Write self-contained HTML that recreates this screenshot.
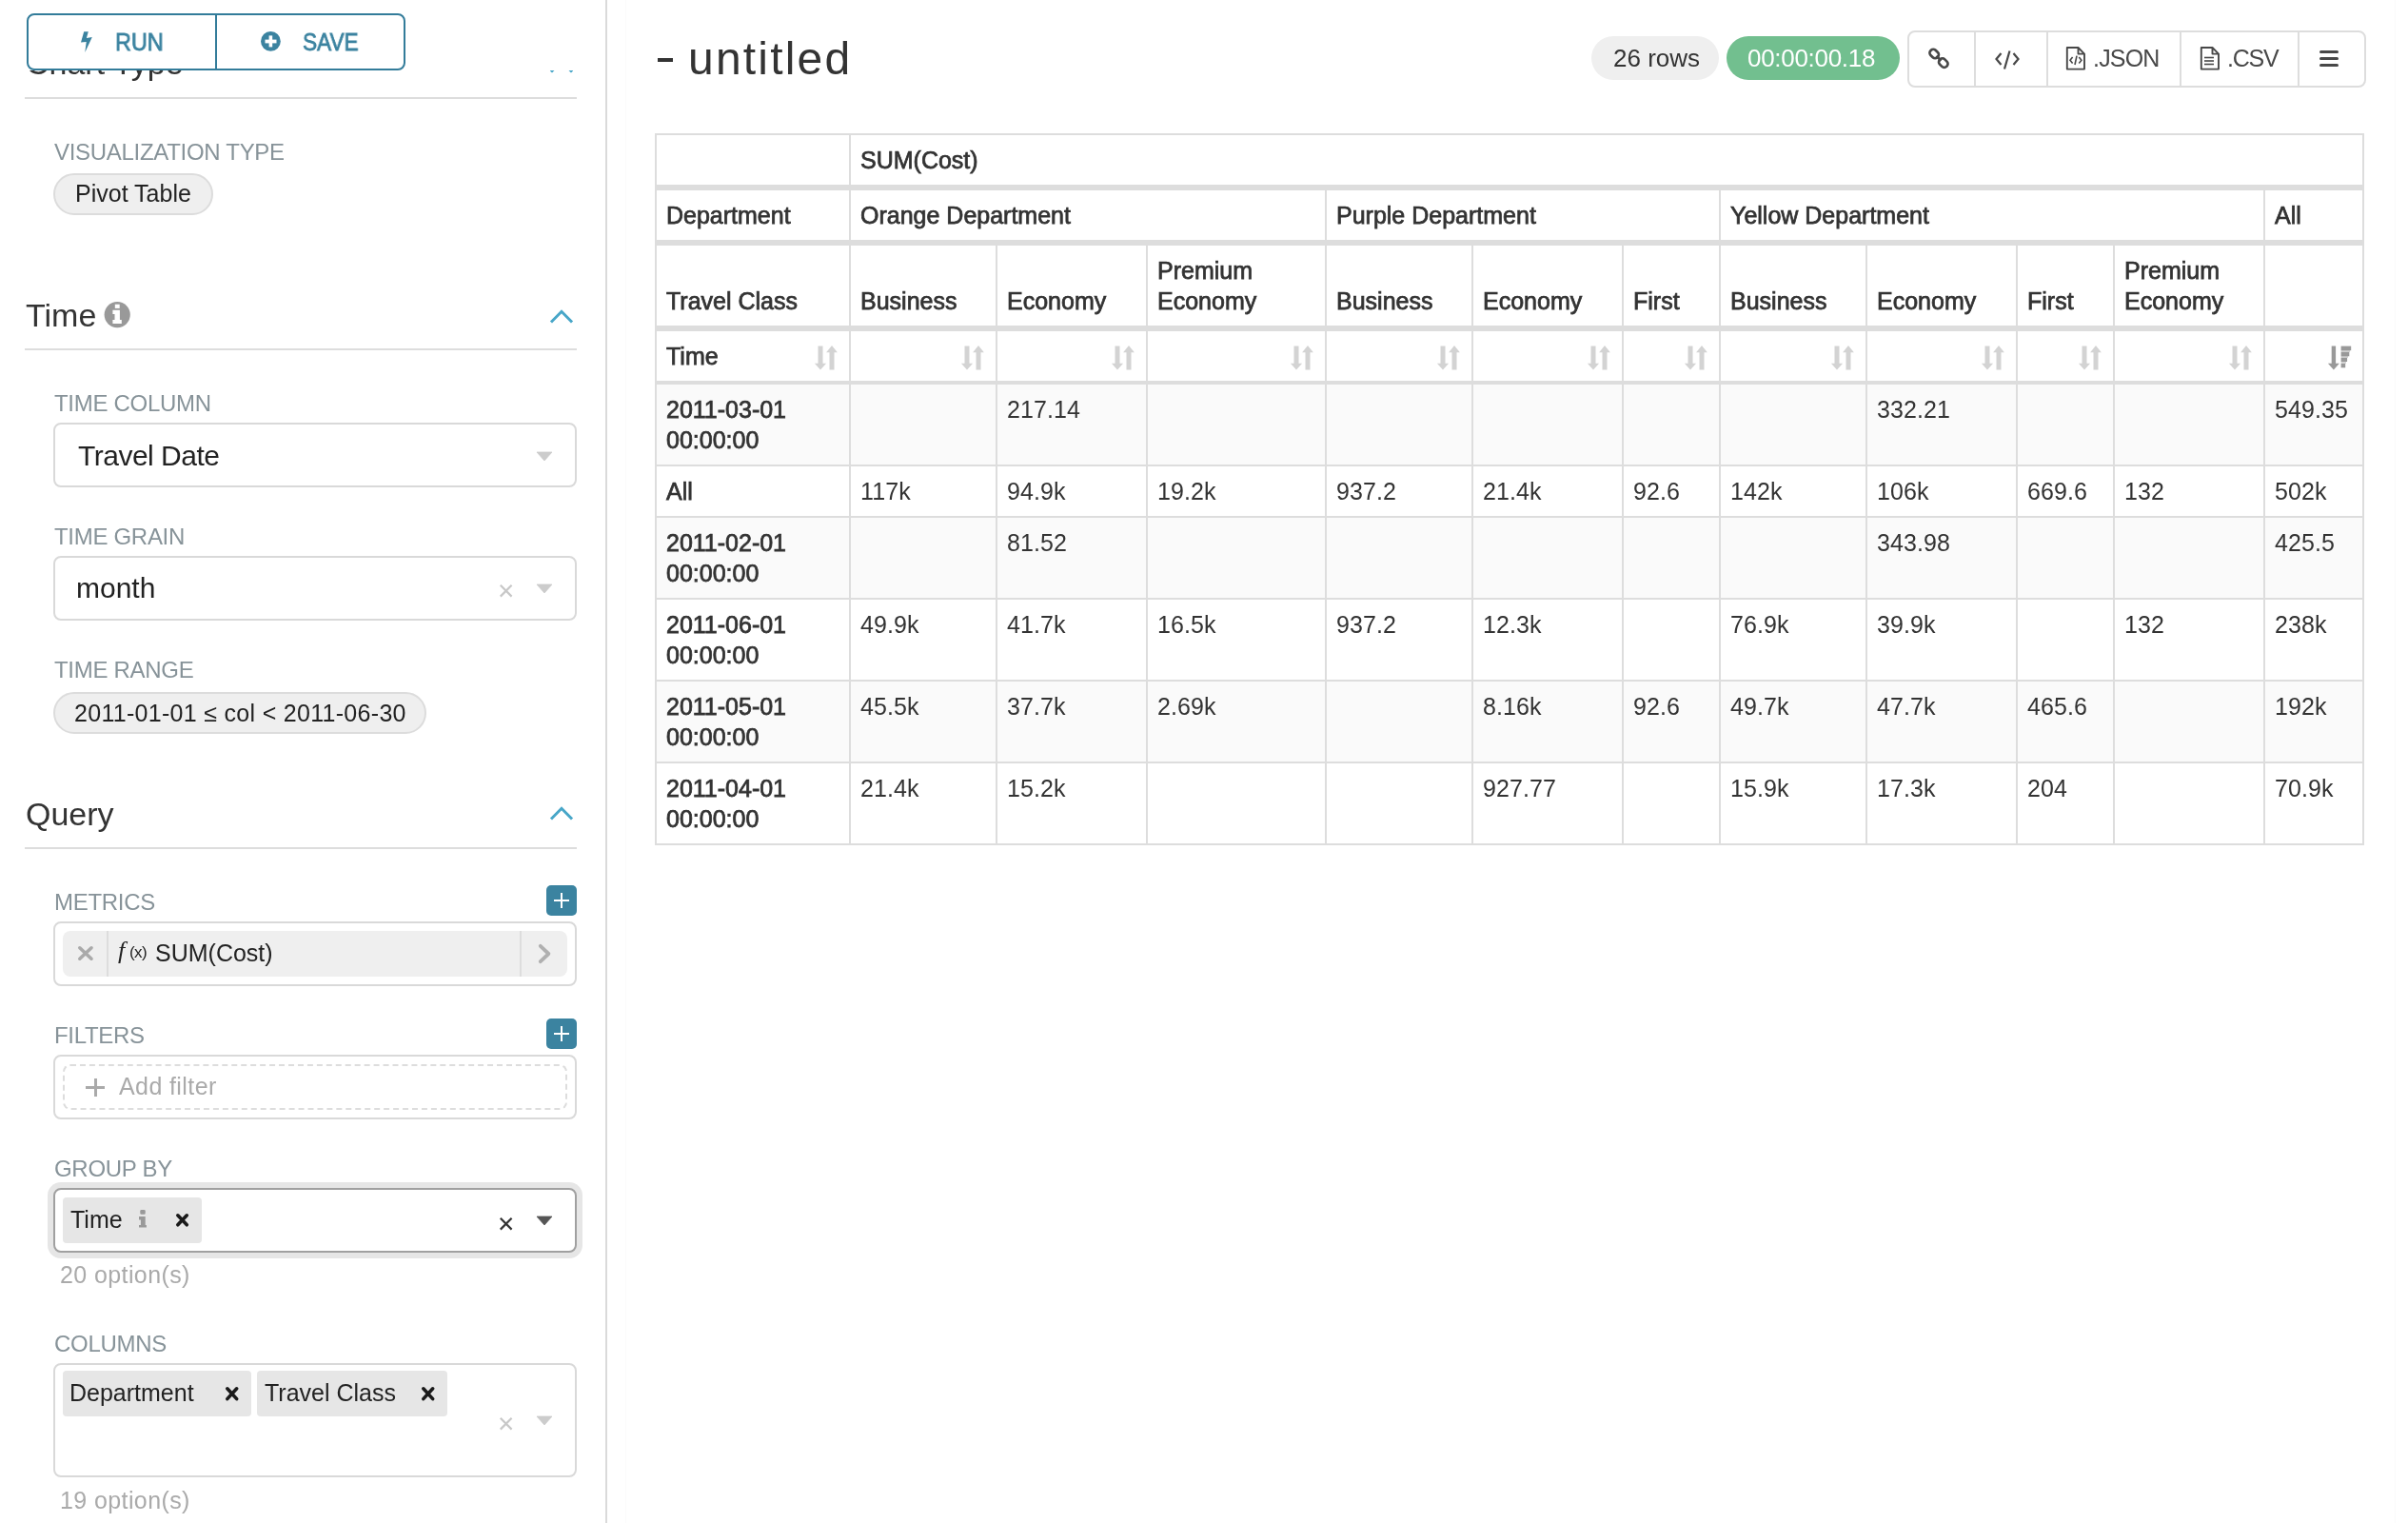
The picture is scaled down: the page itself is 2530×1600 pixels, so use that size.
<!DOCTYPE html>
<html><head><meta charset="utf-8"><title>Superset Explore</title>
<style>
html,body{margin:0;padding:0;background:#fff;}
body{width:2530px;height:1600px;position:relative;overflow:hidden;font-family:"Liberation Sans",sans-serif;}
.t{position:absolute;white-space:nowrap;will-change:transform;}
.r{position:absolute;}
</style></head><body>
<div class="r" style="left:636px;top:0px;width:2px;height:1600px;background:#dadada;"></div>
<div class="r" style="left:657px;top:0px;width:1px;height:1600px;background:#fafafa;"></div>
<div class="r" style="left:2516px;top:0px;width:1px;height:1600px;background:#fafafa;"></div>
<div class="t" style="left:27px;top:48.5px;font-size:34px;line-height:34px;color:#333;font-weight:400;letter-spacing:0px;">Chart Type</div>
<svg class="r" style="left:576px;top:58.5px;" width="28" height="22" viewBox="0 0 28 22"><polyline points="4,15.5 14,5.3 24,15.5" fill="none" stroke="#47a6c8" stroke-width="3" stroke-linecap="square" stroke-linejoin="miter"/></svg>
<div class="r" style="left:0px;top:0px;width:636px;height:74px;background:#fff;"></div>
<div class="r" style="left:28px;top:14px;width:398px;height:60px;box-sizing:border-box;border:2px solid #337c9a;border-radius:8px;background:#fff"></div>
<div class="r" style="left:226px;top:14px;width:2px;height:60px;background:#337c9a;"></div>
<svg class="r" style="left:84px;top:32px;" width="14" height="24" viewBox="0 0 14 24"><polygon points="4.2,1.2 8.8,1.2 6.9,8 12.8,7.1 5.3,22.9 6.7,12 1,12.6" fill="#3b83a0"/></svg>
<div class="t" style="left:121px;top:30.5px;font-size:26px;line-height:26px;color:#3b83a0;font-weight:400;letter-spacing:0px;-webkit-text-stroke:0.8px #3b83a0;transform:scaleX(0.9);transform-origin:0px 0;">RUN</div>
<svg class="r" style="left:273px;top:32px;" width="23" height="23" viewBox="0 0 23 23"><circle cx="11.4" cy="11.4" r="10.4" fill="#3b83a0"/><rect x="5.5" y="9.6" width="12" height="3.8" fill="#fff"/><rect x="9.6" y="5.4" width="3.6" height="12" fill="#fff"/></svg>
<div class="t" style="left:318px;top:30.5px;font-size:26px;line-height:26px;color:#3b83a0;font-weight:400;letter-spacing:0px;-webkit-text-stroke:0.8px #3b83a0;transform:scaleX(0.87);transform-origin:0px 0;">SAVE</div>
<div class="r" style="left:26px;top:102px;width:580px;height:2px;background:#dddddd;"></div>
<div class="r" style="left:26px;top:366px;width:580px;height:2px;background:#dddddd;"></div>
<div class="r" style="left:26px;top:890px;width:580px;height:2px;background:#dddddd;"></div>
<div class="t" style="left:57px;top:147.6px;font-size:24px;line-height:24px;color:#879399;font-weight:400;letter-spacing:-0.3px;">VISUALIZATION TYPE</div>
<div class="r" style="left:56px;top:182px;width:168px;height:44px;box-sizing:border-box;border:2px solid #dcdcdc;border-radius:22px;background:#efefef"></div>
<div class="t" style="left:79px;top:191px;font-size:25px;line-height:25px;color:#222;font-weight:400;letter-spacing:0px;">Pivot Table</div>
<div class="t" style="left:27px;top:314.0px;font-size:34px;line-height:34px;color:#333;font-weight:400;letter-spacing:0px;">Time</div>
<svg class="r" style="left:108px;top:315px;" width="30" height="30" viewBox="0 0 30 30"><circle cx="15.2" cy="15.6" r="13.6" fill="#999"/><rect x="12.8" y="4.7" width="4.9" height="4.2" fill="#fff"/><path d="M10.4,10.8 H17.9 V21 H19.8 V25 H10.4 V21 H12.5 V15 H10.4 Z" fill="#fff"/></svg>
<svg class="r" style="left:576px;top:322px;" width="28" height="22" viewBox="0 0 28 22"><polyline points="4,15.5 14,5.3 24,15.5" fill="none" stroke="#47a6c8" stroke-width="3" stroke-linecap="square" stroke-linejoin="miter"/></svg>
<div class="t" style="left:57px;top:412.3px;font-size:24px;line-height:24px;color:#879399;font-weight:400;letter-spacing:-0.3px;">TIME COLUMN</div>
<div class="r" style="left:56px;top:444px;width:550px;height:68px;box-sizing:border-box;border:2px solid #d9d9d9;border-radius:8px;background:#fff"></div>
<div class="t" style="left:82.4px;top:463.6px;font-size:30px;line-height:30px;color:#222;font-weight:400;letter-spacing:-0.5px;">Travel Date</div>
<svg class="r" style="left:563px;top:473.5px;" width="18" height="11" viewBox="0 0 18 11"><polygon points="1,1 17,1 9,10" fill="#cccccc" stroke="#cccccc" stroke-width="0.8" stroke-linejoin="round"/></svg>
<div class="t" style="left:57px;top:552.4px;font-size:24px;line-height:24px;color:#879399;font-weight:400;letter-spacing:-0.3px;">TIME GRAIN</div>
<div class="r" style="left:56px;top:584px;width:550px;height:68px;box-sizing:border-box;border:2px solid #d9d9d9;border-radius:8px;background:#fff"></div>
<div class="t" style="left:80px;top:603.2px;font-size:30px;line-height:30px;color:#222;font-weight:400;letter-spacing:0px;">month</div>
<svg class="r" style="left:523px;top:612px;" width="17.4" height="17.4" viewBox="0 0 17.4 17.4"><path d="M2.792,2.792 L14.608,14.608 M14.608,2.792 L2.792,14.608" stroke="#c8c8c8" stroke-width="2.2" stroke-linecap="butt"/></svg>
<svg class="r" style="left:563px;top:612.9px;" width="18" height="11" viewBox="0 0 18 11"><polygon points="1,1 17,1 9,10" fill="#cccccc" stroke="#cccccc" stroke-width="0.8" stroke-linejoin="round"/></svg>
<div class="t" style="left:57px;top:692.2px;font-size:24px;line-height:24px;color:#879399;font-weight:400;letter-spacing:-0.3px;">TIME RANGE</div>
<div class="r" style="left:56px;top:727px;width:392px;height:44px;box-sizing:border-box;border:2px solid #dcdcdc;border-radius:22px;background:#efefef"></div>
<div class="t" style="left:78.4px;top:737px;font-size:25px;line-height:25px;color:#222;font-weight:400;letter-spacing:0.3px;">2011-01-01 ≤ col &lt; 2011-06-30</div>
<div class="t" style="left:27px;top:838.0px;font-size:34px;line-height:34px;color:#333;font-weight:400;letter-spacing:0px;">Query</div>
<svg class="r" style="left:576px;top:844.2px;" width="28" height="22" viewBox="0 0 28 22"><polyline points="4,15.5 14,5.3 24,15.5" fill="none" stroke="#47a6c8" stroke-width="3" stroke-linecap="square" stroke-linejoin="miter"/></svg>
<div class="t" style="left:57px;top:936px;font-size:24px;line-height:24px;color:#879399;font-weight:400;letter-spacing:-0.3px;">METRICS</div>
<div class="r" style="left:574px;top:930px;width:32px;height:32px;box-sizing:border-box;background:#3b83a0;border-radius:5px"></div><div class="r" style="left:582px;top:945px;width:16px;height:2px;background:#fff;"></div><div class="r" style="left:589px;top:938px;width:2px;height:16px;background:#fff;"></div>
<div class="r" style="left:56px;top:968px;width:550px;height:68px;box-sizing:border-box;border:2px solid #d9d9d9;border-radius:8px;background:#fff"></div>
<div class="r" style="left:66px;top:978px;width:530px;height:48px;box-sizing:border-box;background:#efefef;border-radius:8px"></div>
<div class="r" style="left:112px;top:978px;width:2px;height:48px;background:#dddddd;"></div>
<div class="r" style="left:546px;top:978px;width:2px;height:48px;background:#dddddd;"></div>
<svg class="r" style="left:80.1px;top:992.4px;" width="19.8" height="19" viewBox="0 0 19.8 19"><path d="M3.8,3.8 L16.0,15.2 M16.0,3.8 L3.8,15.2" stroke="#aaaaaa" stroke-width="3.6" stroke-linecap="round"/></svg>
<div class="t" style="left:124px;top:986px;font-size:26px;line-height:26px;color:#222;font-weight:400;letter-spacing:0px;font-family:'Liberation Serif',serif"><i>f</i></div>
<div class="t" style="left:135.5px;top:991.5px;font-size:17px;line-height:17px;color:#222;font-weight:400;letter-spacing:-0.6px;font-family:'Liberation Sans',sans-serif">(x)</div>
<div class="t" style="left:163px;top:989px;font-size:25px;line-height:25px;color:#222;font-weight:400;letter-spacing:0px;">SUM(Cost)</div>
<svg class="r" style="left:562px;top:990px;" width="20" height="24" viewBox="0 0 20 24"><polyline points="5.8,3.8 14.4,12 5.8,20.2" fill="none" stroke="#b0b0b0" stroke-width="3.8" stroke-linecap="round" stroke-linejoin="round"/></svg>
<div class="t" style="left:57px;top:1076px;font-size:24px;line-height:24px;color:#879399;font-weight:400;letter-spacing:-0.3px;">FILTERS</div>
<div class="r" style="left:574px;top:1070px;width:32px;height:32px;box-sizing:border-box;background:#3b83a0;border-radius:5px"></div><div class="r" style="left:582px;top:1085px;width:16px;height:2px;background:#fff;"></div><div class="r" style="left:589px;top:1078px;width:2px;height:16px;background:#fff;"></div>
<div class="r" style="left:56px;top:1108px;width:550px;height:68px;box-sizing:border-box;border:2px solid #d9d9d9;border-radius:8px;background:#fff"></div>
<div class="r" style="left:66px;top:1118px;width:530px;height:48px;box-sizing:border-box;border:2px dashed #dddddd;border-radius:8px"></div>
<div class="r" style="left:90px;top:1141px;width:20px;height:3px;background:#aaaaaa;"></div><div class="r" style="left:98.5px;top:1132.5px;width:3.0px;height:19.5px;background:#aaaaaa;"></div>
<div class="t" style="left:125px;top:1129.4px;font-size:25px;line-height:25px;color:#aaaaaa;font-weight:400;letter-spacing:0.4px;">Add filter</div>
<div class="t" style="left:57px;top:1216px;font-size:24px;line-height:24px;color:#879399;font-weight:400;letter-spacing:-0.3px;">GROUP BY</div>
<div class="r" style="left:50px;top:1242px;width:562px;height:80px;box-sizing:border-box;background:#e6e6e6;border-radius:14px"></div>
<div class="r" style="left:56px;top:1248px;width:550px;height:68px;box-sizing:border-box;border:2px solid #a0a0a0;border-radius:8px;background:#fff"></div>
<div class="r" style="left:66px;top:1258px;width:146px;height:48px;box-sizing:border-box;background:#e6e6e6;border-radius:4px"></div>
<div class="t" style="left:74px;top:1269px;font-size:25px;line-height:25px;color:#222;font-weight:400;letter-spacing:0px;">Time</div>
<svg class="r" style="left:144px;top:1269px;" width="12" height="23" viewBox="0 0 12 23"><rect x="3.3" y="2" width="5.4" height="4.7" rx="1.2" fill="#999"/><path d="M2,9.1 H8.7 V18 H9.9 V20.6 H2 V18 H3.9 V12.6 H2 Z" fill="#999"/></svg>
<svg class="r" style="left:183.4px;top:1273.1px;" width="17.1" height="17.6" viewBox="0 0 17.1 17.6"><path d="M3.8,3.8 L13.299999999999999,13.799999999999999 M13.299999999999999,3.8 L3.8,13.799999999999999" stroke="#1a1a1a" stroke-width="3.6" stroke-linecap="round"/></svg>
<svg class="r" style="left:523px;top:1276.5px;" width="17.4" height="17.4" viewBox="0 0 17.4 17.4"><path d="M2.792,2.792 L14.608,14.608 M14.608,2.792 L2.792,14.608" stroke="#333333" stroke-width="2.2" stroke-linecap="butt"/></svg>
<svg class="r" style="left:563px;top:1277px;" width="18" height="11" viewBox="0 0 18 11"><polygon points="1,1 17,1 9,10" fill="#555555" stroke="#555555" stroke-width="0.8" stroke-linejoin="round"/></svg>
<div class="t" style="left:63.3px;top:1327.4px;font-size:25px;line-height:25px;color:#aaaaaa;font-weight:400;letter-spacing:0.4px;">20 option(s)</div>
<div class="t" style="left:57px;top:1400.3px;font-size:24px;line-height:24px;color:#879399;font-weight:400;letter-spacing:-0.3px;">COLUMNS</div>
<div class="r" style="left:56px;top:1432px;width:550px;height:120px;box-sizing:border-box;border:2px solid #d9d9d9;border-radius:8px;background:#fff"></div>
<div class="r" style="left:66px;top:1440px;width:198px;height:48px;box-sizing:border-box;background:#e6e6e6;border-radius:4px"></div>
<div class="t" style="left:73px;top:1451px;font-size:25px;line-height:25px;color:#222;font-weight:400;letter-spacing:0px;">Department</div>
<svg class="r" style="left:235.2px;top:1454.7px;" width="17.5" height="18.4" viewBox="0 0 17.5 18.4"><path d="M3.8,3.8 L13.7,14.6 M13.7,3.8 L3.8,14.6" stroke="#1a1a1a" stroke-width="3.6" stroke-linecap="round"/></svg>
<div class="r" style="left:270px;top:1440px;width:200px;height:48px;box-sizing:border-box;background:#e6e6e6;border-radius:4px"></div>
<div class="t" style="left:278.3px;top:1451px;font-size:25px;line-height:25px;color:#222;font-weight:400;letter-spacing:0px;">Travel Class</div>
<svg class="r" style="left:441.3px;top:1454.7px;" width="17.5" height="18.4" viewBox="0 0 17.5 18.4"><path d="M3.8,3.8 L13.7,14.6 M13.7,3.8 L3.8,14.6" stroke="#1a1a1a" stroke-width="3.6" stroke-linecap="round"/></svg>
<svg class="r" style="left:523px;top:1487px;" width="17.4" height="17.4" viewBox="0 0 17.4 17.4"><path d="M2.792,2.792 L14.608,14.608 M14.608,2.792 L2.792,14.608" stroke="#c8c8c8" stroke-width="2.2" stroke-linecap="butt"/></svg>
<svg class="r" style="left:563px;top:1487px;" width="18" height="11" viewBox="0 0 18 11"><polygon points="1,1 17,1 9,10" fill="#cccccc" stroke="#cccccc" stroke-width="0.8" stroke-linejoin="round"/></svg>
<div class="t" style="left:63.3px;top:1563.6px;font-size:25px;line-height:25px;color:#aaaaaa;font-weight:400;letter-spacing:0.4px;">19 option(s)</div>
<div class="r" style="left:691px;top:61px;width:16px;height:4px;background:#333;"></div>
<div class="t" style="left:723.4px;top:37.7px;font-size:48px;line-height:48px;color:#333;font-weight:400;letter-spacing:2.2px;">untitled</div>
<div class="r" style="left:1672px;top:38px;width:134px;height:46px;box-sizing:border-box;background:#efefef;border-radius:23px"></div>
<div class="t" style="left:1695px;top:48px;font-size:26px;line-height:26px;color:#333;font-weight:400;letter-spacing:0px;">26 rows</div>
<div class="r" style="left:1814px;top:38px;width:182px;height:46px;box-sizing:border-box;background:#72bf8f;border-radius:23px"></div>
<div class="t" style="left:1836px;top:48px;font-size:26px;line-height:26px;color:#fff;font-weight:400;letter-spacing:-0.3px;">00:00:00.18</div>
<div class="r" style="left:2004px;top:32px;width:482px;height:60px;box-sizing:border-box;border:2px solid #dddddd;border-radius:8px;background:#fff"></div>
<div class="r" style="left:2074px;top:32px;width:2px;height:60px;background:#dddddd;"></div>
<div class="r" style="left:2150px;top:32px;width:2px;height:60px;background:#dddddd;"></div>
<div class="r" style="left:2290px;top:32px;width:2px;height:60px;background:#dddddd;"></div>
<div class="r" style="left:2414px;top:32px;width:2px;height:60px;background:#dddddd;"></div>
<svg class="r" style="left:2022px;top:46px;" width="30" height="30" viewBox="0 0 30 30"><g fill="none" stroke="#484848" stroke-width="2.7"><rect x="5.2" y="6.8" width="10" height="7.4" rx="3.4" transform="rotate(45 10.2 10.5)"/><rect x="14.8" y="16.4" width="10" height="7.4" rx="3.4" transform="rotate(45 19.8 20.1)"/></g><path d="M12.5,12.8 L17.5,17.8" stroke="#484848" stroke-width="2.7"/></svg>
<svg class="r" style="left:2095px;top:53px;" width="28" height="22" viewBox="0 0 28 22"><g fill="none" stroke="#484848" stroke-width="2.2"><polyline points="7.5,3 2.5,9 7.5,15"/><polyline points="20.5,3 25.5,9 20.5,15"/><line x1="16.5" y1="0.5" x2="11" y2="19.5"/></g></svg>
<svg class="r" style="left:2170px;top:48px;" width="24" height="27" viewBox="0 0 24 27"><path d="M1.8,2 H13.5 L20,8.6 V24.6 H1.8 Z M13.5,2 V8.6 H20" fill="none" stroke="#484848" stroke-width="1.9" stroke-linejoin="round"/><g fill="none" stroke="#484848" stroke-width="1.6"><polyline points="7.6,12 5,15.2 7.6,18.4"/><polyline points="14.3,12 16.9,15.2 14.3,18.4"/><line x1="12" y1="10.7" x2="10" y2="20"/></g></svg>
<div class="t" style="left:2199.4px;top:48.900000000000006px;font-size:25px;line-height:25px;color:#484848;font-weight:400;letter-spacing:-0.8px;">.JSON</div>
<svg class="r" style="left:2311px;top:48px;" width="24" height="27" viewBox="0 0 24 27"><path d="M1.8,2 H13.5 L20,8.6 V24.6 H1.8 Z M13.5,2 V8.6 H20" fill="none" stroke="#484848" stroke-width="1.9" stroke-linejoin="round"/><g stroke="#484848" stroke-width="1.6"><line x1="5" y1="12.5" x2="15" y2="12.5"/><line x1="5" y1="16" x2="15" y2="16"/><line x1="5" y1="19.5" x2="15" y2="19.5"/></g></svg>
<div class="t" style="left:2340px;top:48.7px;font-size:25px;line-height:25px;color:#484848;font-weight:400;letter-spacing:-1.2px;">.CSV</div>
<div class="r" style="left:2437px;top:53px;width:20px;height:3px;box-sizing:border-box;background:#484848;border-radius:1.5px"></div>
<div class="r" style="left:2437px;top:60px;width:20px;height:3px;box-sizing:border-box;background:#484848;border-radius:1.5px"></div>
<div class="r" style="left:2437px;top:67px;width:20px;height:3px;box-sizing:border-box;background:#484848;border-radius:1.5px"></div>
<div class="r" style="left:690px;top:404px;width:1792px;height:84px;background:#fafafa;"></div>
<div class="r" style="left:690px;top:544px;width:1792px;height:84px;background:#fafafa;"></div>
<div class="r" style="left:690px;top:716px;width:1792px;height:84px;background:#fafafa;"></div>
<div class="r" style="left:688px;top:140px;width:1796px;height:2px;background:#dddddd;"></div>
<div class="r" style="left:688px;top:194px;width:1796px;height:6px;background:#dddddd;"></div>
<div class="r" style="left:688px;top:252px;width:1796px;height:6px;background:#dddddd;"></div>
<div class="r" style="left:688px;top:342px;width:1796px;height:6px;background:#dddddd;"></div>
<div class="r" style="left:688px;top:400px;width:1796px;height:4px;background:#dddddd;"></div>
<div class="r" style="left:688px;top:488px;width:1796px;height:2px;background:#dddddd;"></div>
<div class="r" style="left:688px;top:542px;width:1796px;height:2px;background:#dddddd;"></div>
<div class="r" style="left:688px;top:628px;width:1796px;height:2px;background:#dddddd;"></div>
<div class="r" style="left:688px;top:714px;width:1796px;height:2px;background:#dddddd;"></div>
<div class="r" style="left:688px;top:800px;width:1796px;height:2px;background:#dddddd;"></div>
<div class="r" style="left:688px;top:886px;width:1796px;height:2px;background:#dddddd;"></div>
<div class="r" style="left:688px;top:140px;width:2px;height:748px;background:#dddddd;"></div>
<div class="r" style="left:2482px;top:140px;width:2px;height:748px;background:#dddddd;"></div>
<div class="r" style="left:892px;top:140px;width:2px;height:748px;background:#dddddd;"></div>
<div class="r" style="left:1392px;top:194px;width:2px;height:694px;background:#dddddd;"></div>
<div class="r" style="left:1806px;top:194px;width:2px;height:694px;background:#dddddd;"></div>
<div class="r" style="left:2378px;top:194px;width:2px;height:694px;background:#dddddd;"></div>
<div class="r" style="left:1046px;top:252px;width:2px;height:636px;background:#dddddd;"></div>
<div class="r" style="left:1204px;top:252px;width:2px;height:636px;background:#dddddd;"></div>
<div class="r" style="left:1546px;top:252px;width:2px;height:636px;background:#dddddd;"></div>
<div class="r" style="left:1704px;top:252px;width:2px;height:636px;background:#dddddd;"></div>
<div class="r" style="left:1960px;top:252px;width:2px;height:636px;background:#dddddd;"></div>
<div class="r" style="left:2118px;top:252px;width:2px;height:636px;background:#dddddd;"></div>
<div class="r" style="left:2220px;top:252px;width:2px;height:636px;background:#dddddd;"></div>
<div class="t" style="left:904px;top:155.5px;font-size:25px;line-height:25px;color:#333333;font-weight:400;letter-spacing:0px;-webkit-text-stroke:0.75px #333333;">SUM(Cost)</div>
<div class="t" style="left:700px;top:213.5px;font-size:25px;line-height:25px;color:#333333;font-weight:400;letter-spacing:0px;-webkit-text-stroke:0.75px #333333;">Department</div>
<div class="t" style="left:904px;top:213.5px;font-size:25px;line-height:25px;color:#333333;font-weight:400;letter-spacing:0px;-webkit-text-stroke:0.75px #333333;">Orange Department</div>
<div class="t" style="left:1404px;top:213.5px;font-size:25px;line-height:25px;color:#333333;font-weight:400;letter-spacing:0px;-webkit-text-stroke:0.75px #333333;">Purple Department</div>
<div class="t" style="left:1818px;top:213.5px;font-size:25px;line-height:25px;color:#333333;font-weight:400;letter-spacing:0px;-webkit-text-stroke:0.75px #333333;">Yellow Department</div>
<div class="t" style="left:2390px;top:213.5px;font-size:25px;line-height:25px;color:#333333;font-weight:400;letter-spacing:0px;-webkit-text-stroke:0.75px #333333;">All</div>
<div class="t" style="left:700px;top:303.5px;font-size:25px;line-height:25px;color:#333333;font-weight:400;letter-spacing:0px;-webkit-text-stroke:0.75px #333333;">Travel Class</div>
<div class="t" style="left:904px;top:303.5px;font-size:25px;line-height:25px;color:#333333;font-weight:400;letter-spacing:0px;-webkit-text-stroke:0.75px #333333;">Business</div>
<div class="t" style="left:1058px;top:303.5px;font-size:25px;line-height:25px;color:#333333;font-weight:400;letter-spacing:0px;-webkit-text-stroke:0.75px #333333;">Economy</div>
<div class="t" style="left:1216px;top:271.5px;font-size:25px;line-height:25px;color:#333333;font-weight:400;letter-spacing:0px;-webkit-text-stroke:0.75px #333333;">Premium</div>
<div class="t" style="left:1216px;top:303.5px;font-size:25px;line-height:25px;color:#333333;font-weight:400;letter-spacing:0px;-webkit-text-stroke:0.75px #333333;">Economy</div>
<div class="t" style="left:1404px;top:303.5px;font-size:25px;line-height:25px;color:#333333;font-weight:400;letter-spacing:0px;-webkit-text-stroke:0.75px #333333;">Business</div>
<div class="t" style="left:1558px;top:303.5px;font-size:25px;line-height:25px;color:#333333;font-weight:400;letter-spacing:0px;-webkit-text-stroke:0.75px #333333;">Economy</div>
<div class="t" style="left:1716px;top:303.5px;font-size:25px;line-height:25px;color:#333333;font-weight:400;letter-spacing:0px;-webkit-text-stroke:0.75px #333333;">First</div>
<div class="t" style="left:1818px;top:303.5px;font-size:25px;line-height:25px;color:#333333;font-weight:400;letter-spacing:0px;-webkit-text-stroke:0.75px #333333;">Business</div>
<div class="t" style="left:1972px;top:303.5px;font-size:25px;line-height:25px;color:#333333;font-weight:400;letter-spacing:0px;-webkit-text-stroke:0.75px #333333;">Economy</div>
<div class="t" style="left:2130px;top:303.5px;font-size:25px;line-height:25px;color:#333333;font-weight:400;letter-spacing:0px;-webkit-text-stroke:0.75px #333333;">First</div>
<div class="t" style="left:2232px;top:271.5px;font-size:25px;line-height:25px;color:#333333;font-weight:400;letter-spacing:0px;-webkit-text-stroke:0.75px #333333;">Premium</div>
<div class="t" style="left:2232px;top:303.5px;font-size:25px;line-height:25px;color:#333333;font-weight:400;letter-spacing:0px;-webkit-text-stroke:0.75px #333333;">Economy</div>
<div class="t" style="left:700px;top:361.5px;font-size:25px;line-height:25px;color:#333333;font-weight:400;letter-spacing:0px;-webkit-text-stroke:0.75px #333333;">Time</div>
<svg class="r" style="left:855px;top:362px;" width="27" height="28" viewBox="0 0 27 28"><path d="M4.5,1.5 H9.5 V19.8 H13.1 L7,26.4 L0.9,19.8 H4.5 Z M16.5,26.6 H21.5 V8.3 H24.9 L19,1.1 L13.1,8.3 H16.5 Z" fill="#d3d3d3"/></svg>
<svg class="r" style="left:1009px;top:362px;" width="27" height="28" viewBox="0 0 27 28"><path d="M4.5,1.5 H9.5 V19.8 H13.1 L7,26.4 L0.9,19.8 H4.5 Z M16.5,26.6 H21.5 V8.3 H24.9 L19,1.1 L13.1,8.3 H16.5 Z" fill="#d3d3d3"/></svg>
<svg class="r" style="left:1167px;top:362px;" width="27" height="28" viewBox="0 0 27 28"><path d="M4.5,1.5 H9.5 V19.8 H13.1 L7,26.4 L0.9,19.8 H4.5 Z M16.5,26.6 H21.5 V8.3 H24.9 L19,1.1 L13.1,8.3 H16.5 Z" fill="#d3d3d3"/></svg>
<svg class="r" style="left:1355px;top:362px;" width="27" height="28" viewBox="0 0 27 28"><path d="M4.5,1.5 H9.5 V19.8 H13.1 L7,26.4 L0.9,19.8 H4.5 Z M16.5,26.6 H21.5 V8.3 H24.9 L19,1.1 L13.1,8.3 H16.5 Z" fill="#d3d3d3"/></svg>
<svg class="r" style="left:1509px;top:362px;" width="27" height="28" viewBox="0 0 27 28"><path d="M4.5,1.5 H9.5 V19.8 H13.1 L7,26.4 L0.9,19.8 H4.5 Z M16.5,26.6 H21.5 V8.3 H24.9 L19,1.1 L13.1,8.3 H16.5 Z" fill="#d3d3d3"/></svg>
<svg class="r" style="left:1667px;top:362px;" width="27" height="28" viewBox="0 0 27 28"><path d="M4.5,1.5 H9.5 V19.8 H13.1 L7,26.4 L0.9,19.8 H4.5 Z M16.5,26.6 H21.5 V8.3 H24.9 L19,1.1 L13.1,8.3 H16.5 Z" fill="#d3d3d3"/></svg>
<svg class="r" style="left:1769px;top:362px;" width="27" height="28" viewBox="0 0 27 28"><path d="M4.5,1.5 H9.5 V19.8 H13.1 L7,26.4 L0.9,19.8 H4.5 Z M16.5,26.6 H21.5 V8.3 H24.9 L19,1.1 L13.1,8.3 H16.5 Z" fill="#d3d3d3"/></svg>
<svg class="r" style="left:1923px;top:362px;" width="27" height="28" viewBox="0 0 27 28"><path d="M4.5,1.5 H9.5 V19.8 H13.1 L7,26.4 L0.9,19.8 H4.5 Z M16.5,26.6 H21.5 V8.3 H24.9 L19,1.1 L13.1,8.3 H16.5 Z" fill="#d3d3d3"/></svg>
<svg class="r" style="left:2081px;top:362px;" width="27" height="28" viewBox="0 0 27 28"><path d="M4.5,1.5 H9.5 V19.8 H13.1 L7,26.4 L0.9,19.8 H4.5 Z M16.5,26.6 H21.5 V8.3 H24.9 L19,1.1 L13.1,8.3 H16.5 Z" fill="#d3d3d3"/></svg>
<svg class="r" style="left:2183px;top:362px;" width="27" height="28" viewBox="0 0 27 28"><path d="M4.5,1.5 H9.5 V19.8 H13.1 L7,26.4 L0.9,19.8 H4.5 Z M16.5,26.6 H21.5 V8.3 H24.9 L19,1.1 L13.1,8.3 H16.5 Z" fill="#d3d3d3"/></svg>
<svg class="r" style="left:2341px;top:362px;" width="27" height="28" viewBox="0 0 27 28"><path d="M4.5,1.5 H9.5 V19.8 H13.1 L7,26.4 L0.9,19.8 H4.5 Z M16.5,26.6 H21.5 V8.3 H24.9 L19,1.1 L13.1,8.3 H16.5 Z" fill="#d3d3d3"/></svg>
<svg class="r" style="left:2445px;top:362px;" width="27" height="28" viewBox="0 0 27 28"><path d="M14.6,6 H24 V8 H14.6 Z M14.6,12 H22 V14 H14.6 Z M14.6,18 H20 V20 H14.6 Z" fill="#d3d3d3"/><path d="M4.7,1.6 H9.1 V19.8 H12.9 L6.9,26.6 L0.9,19.8 H4.7 Z" fill="#999999"/><rect x="14.6" y="1.6" width="10.6" height="4.6" fill="#999999"/><rect x="14.6" y="7.9" width="8.7" height="4.4" fill="#999999"/><rect x="14.6" y="13.9" width="6.5" height="4.1" fill="#999999"/><rect x="14.6" y="20" width="4.6" height="4.3" fill="#999999"/></svg>
<div class="t" style="left:700px;top:417.5px;font-size:25px;line-height:25px;color:#333333;font-weight:400;letter-spacing:0px;-webkit-text-stroke:0.75px #333333;">2011-03-01</div>
<div class="t" style="left:700px;top:449.5px;font-size:25px;line-height:25px;color:#333333;font-weight:400;letter-spacing:0px;-webkit-text-stroke:0.75px #333333;">00:00:00</div>
<div class="t" style="left:1058px;top:417.5px;font-size:25px;line-height:25px;color:#333333;font-weight:400;letter-spacing:0.1px;">217.14</div>
<div class="t" style="left:1972px;top:417.5px;font-size:25px;line-height:25px;color:#333333;font-weight:400;letter-spacing:0.1px;">332.21</div>
<div class="t" style="left:2390px;top:417.5px;font-size:25px;line-height:25px;color:#333333;font-weight:400;letter-spacing:0.1px;">549.35</div>
<div class="t" style="left:700px;top:503.5px;font-size:25px;line-height:25px;color:#333333;font-weight:400;letter-spacing:0px;-webkit-text-stroke:0.75px #333333;">All</div>
<div class="t" style="left:904px;top:503.5px;font-size:25px;line-height:25px;color:#333333;font-weight:400;letter-spacing:0.1px;">117k</div>
<div class="t" style="left:1058px;top:503.5px;font-size:25px;line-height:25px;color:#333333;font-weight:400;letter-spacing:0.1px;">94.9k</div>
<div class="t" style="left:1216px;top:503.5px;font-size:25px;line-height:25px;color:#333333;font-weight:400;letter-spacing:0.1px;">19.2k</div>
<div class="t" style="left:1404px;top:503.5px;font-size:25px;line-height:25px;color:#333333;font-weight:400;letter-spacing:0.1px;">937.2</div>
<div class="t" style="left:1558px;top:503.5px;font-size:25px;line-height:25px;color:#333333;font-weight:400;letter-spacing:0.1px;">21.4k</div>
<div class="t" style="left:1716px;top:503.5px;font-size:25px;line-height:25px;color:#333333;font-weight:400;letter-spacing:0.1px;">92.6</div>
<div class="t" style="left:1818px;top:503.5px;font-size:25px;line-height:25px;color:#333333;font-weight:400;letter-spacing:0.1px;">142k</div>
<div class="t" style="left:1972px;top:503.5px;font-size:25px;line-height:25px;color:#333333;font-weight:400;letter-spacing:0.1px;">106k</div>
<div class="t" style="left:2130px;top:503.5px;font-size:25px;line-height:25px;color:#333333;font-weight:400;letter-spacing:0.1px;">669.6</div>
<div class="t" style="left:2232px;top:503.5px;font-size:25px;line-height:25px;color:#333333;font-weight:400;letter-spacing:0.1px;">132</div>
<div class="t" style="left:2390px;top:503.5px;font-size:25px;line-height:25px;color:#333333;font-weight:400;letter-spacing:0.1px;">502k</div>
<div class="t" style="left:700px;top:557.5px;font-size:25px;line-height:25px;color:#333333;font-weight:400;letter-spacing:0px;-webkit-text-stroke:0.75px #333333;">2011-02-01</div>
<div class="t" style="left:700px;top:589.5px;font-size:25px;line-height:25px;color:#333333;font-weight:400;letter-spacing:0px;-webkit-text-stroke:0.75px #333333;">00:00:00</div>
<div class="t" style="left:1058px;top:557.5px;font-size:25px;line-height:25px;color:#333333;font-weight:400;letter-spacing:0.1px;">81.52</div>
<div class="t" style="left:1972px;top:557.5px;font-size:25px;line-height:25px;color:#333333;font-weight:400;letter-spacing:0.1px;">343.98</div>
<div class="t" style="left:2390px;top:557.5px;font-size:25px;line-height:25px;color:#333333;font-weight:400;letter-spacing:0.1px;">425.5</div>
<div class="t" style="left:700px;top:643.5px;font-size:25px;line-height:25px;color:#333333;font-weight:400;letter-spacing:0px;-webkit-text-stroke:0.75px #333333;">2011-06-01</div>
<div class="t" style="left:700px;top:675.5px;font-size:25px;line-height:25px;color:#333333;font-weight:400;letter-spacing:0px;-webkit-text-stroke:0.75px #333333;">00:00:00</div>
<div class="t" style="left:904px;top:643.5px;font-size:25px;line-height:25px;color:#333333;font-weight:400;letter-spacing:0.1px;">49.9k</div>
<div class="t" style="left:1058px;top:643.5px;font-size:25px;line-height:25px;color:#333333;font-weight:400;letter-spacing:0.1px;">41.7k</div>
<div class="t" style="left:1216px;top:643.5px;font-size:25px;line-height:25px;color:#333333;font-weight:400;letter-spacing:0.1px;">16.5k</div>
<div class="t" style="left:1404px;top:643.5px;font-size:25px;line-height:25px;color:#333333;font-weight:400;letter-spacing:0.1px;">937.2</div>
<div class="t" style="left:1558px;top:643.5px;font-size:25px;line-height:25px;color:#333333;font-weight:400;letter-spacing:0.1px;">12.3k</div>
<div class="t" style="left:1818px;top:643.5px;font-size:25px;line-height:25px;color:#333333;font-weight:400;letter-spacing:0.1px;">76.9k</div>
<div class="t" style="left:1972px;top:643.5px;font-size:25px;line-height:25px;color:#333333;font-weight:400;letter-spacing:0.1px;">39.9k</div>
<div class="t" style="left:2232px;top:643.5px;font-size:25px;line-height:25px;color:#333333;font-weight:400;letter-spacing:0.1px;">132</div>
<div class="t" style="left:2390px;top:643.5px;font-size:25px;line-height:25px;color:#333333;font-weight:400;letter-spacing:0.1px;">238k</div>
<div class="t" style="left:700px;top:729.5px;font-size:25px;line-height:25px;color:#333333;font-weight:400;letter-spacing:0px;-webkit-text-stroke:0.75px #333333;">2011-05-01</div>
<div class="t" style="left:700px;top:761.5px;font-size:25px;line-height:25px;color:#333333;font-weight:400;letter-spacing:0px;-webkit-text-stroke:0.75px #333333;">00:00:00</div>
<div class="t" style="left:904px;top:729.5px;font-size:25px;line-height:25px;color:#333333;font-weight:400;letter-spacing:0.1px;">45.5k</div>
<div class="t" style="left:1058px;top:729.5px;font-size:25px;line-height:25px;color:#333333;font-weight:400;letter-spacing:0.1px;">37.7k</div>
<div class="t" style="left:1216px;top:729.5px;font-size:25px;line-height:25px;color:#333333;font-weight:400;letter-spacing:0.1px;">2.69k</div>
<div class="t" style="left:1558px;top:729.5px;font-size:25px;line-height:25px;color:#333333;font-weight:400;letter-spacing:0.1px;">8.16k</div>
<div class="t" style="left:1716px;top:729.5px;font-size:25px;line-height:25px;color:#333333;font-weight:400;letter-spacing:0.1px;">92.6</div>
<div class="t" style="left:1818px;top:729.5px;font-size:25px;line-height:25px;color:#333333;font-weight:400;letter-spacing:0.1px;">49.7k</div>
<div class="t" style="left:1972px;top:729.5px;font-size:25px;line-height:25px;color:#333333;font-weight:400;letter-spacing:0.1px;">47.7k</div>
<div class="t" style="left:2130px;top:729.5px;font-size:25px;line-height:25px;color:#333333;font-weight:400;letter-spacing:0.1px;">465.6</div>
<div class="t" style="left:2390px;top:729.5px;font-size:25px;line-height:25px;color:#333333;font-weight:400;letter-spacing:0.1px;">192k</div>
<div class="t" style="left:700px;top:815.5px;font-size:25px;line-height:25px;color:#333333;font-weight:400;letter-spacing:0px;-webkit-text-stroke:0.75px #333333;">2011-04-01</div>
<div class="t" style="left:700px;top:847.5px;font-size:25px;line-height:25px;color:#333333;font-weight:400;letter-spacing:0px;-webkit-text-stroke:0.75px #333333;">00:00:00</div>
<div class="t" style="left:904px;top:815.5px;font-size:25px;line-height:25px;color:#333333;font-weight:400;letter-spacing:0.1px;">21.4k</div>
<div class="t" style="left:1058px;top:815.5px;font-size:25px;line-height:25px;color:#333333;font-weight:400;letter-spacing:0.1px;">15.2k</div>
<div class="t" style="left:1558px;top:815.5px;font-size:25px;line-height:25px;color:#333333;font-weight:400;letter-spacing:0.1px;">927.77</div>
<div class="t" style="left:1818px;top:815.5px;font-size:25px;line-height:25px;color:#333333;font-weight:400;letter-spacing:0.1px;">15.9k</div>
<div class="t" style="left:1972px;top:815.5px;font-size:25px;line-height:25px;color:#333333;font-weight:400;letter-spacing:0.1px;">17.3k</div>
<div class="t" style="left:2130px;top:815.5px;font-size:25px;line-height:25px;color:#333333;font-weight:400;letter-spacing:0.1px;">204</div>
<div class="t" style="left:2390px;top:815.5px;font-size:25px;line-height:25px;color:#333333;font-weight:400;letter-spacing:0.1px;">70.9k</div>
</body></html>
